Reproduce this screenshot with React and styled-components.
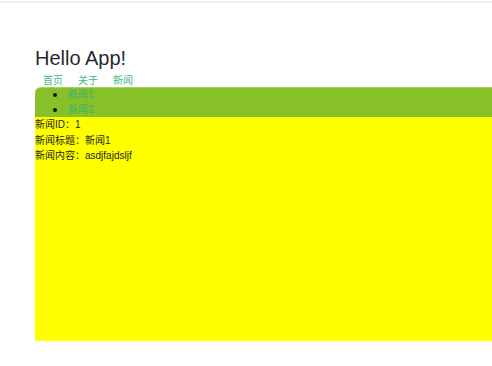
import React from "react";
import styled, { createGlobalStyle } from "styled-components";

const GlobalStyle = createGlobalStyle`
  body {
    margin: 0;
    background: #fff;
    font-family: "Liberation Sans", "Noto Sans CJK SC", sans-serif;
    color: #2c3e50;
  }
`;

const Page = styled.div`
  width: 492px;
  height: 366px;
  overflow: hidden;
  border-top: 2px solid #efefef;
  margin-top: 1px;
  box-sizing: border-box;
`;

const Main = styled.div`
  padding: 43px 0 0 35px;
`;

const Title = styled.h1`
  margin: 0;
  font-size: 20px;
  font-weight: 400;
  line-height: 24px;
  color: #1f2a33;
`;

const Nav = styled.nav`
  display: flex;
  gap: 15px;
  padding: 4px 0 0 8px;
  height: 13px;
`;

const NavLink = styled.a`
  font-size: 10px;
  line-height: 14px;
  color: #42b983;
  text-decoration: none;
`;

const NewsList = styled.ul`
  margin: 0;
  padding: 0 0 0 33px;
  height: 29px;
  list-style: none;
  background: #86c12a;
  border-top-left-radius: 6px;
  border-top: 1px solid #a7cf63;
`;

const NewsItem = styled.li`
  position: relative;
  font-size: 10px;
  line-height: 14.5px;
  color: #3bb36a;
  &::before {
    content: "";
    position: absolute;
    left: -15px;
    top: 5px;
    width: 4px;
    height: 4px;
    border-radius: 50%;
    background: #111;
  }
`;

const Detail = styled.div`
  background: #ffff00;
  height: 224px;
`;

const Line = styled.p`
  margin: 0;
  font-size: 10px;
  line-height: 15.5px;
  color: #222;
`;

export default function App() {
  return (
    <Page>
      <GlobalStyle />
      <Main>
        <Title>Hello App!</Title>
        <Nav>
          <NavLink href="#">首页</NavLink>
          <NavLink href="#">关于</NavLink>
          <NavLink href="#">新闻</NavLink>
        </Nav>
        <NewsList>
          <NewsItem>新闻1</NewsItem>
          <NewsItem>新闻2</NewsItem>
        </NewsList>
        <Detail>
          <Line>新闻ID：1</Line>
          <Line>新闻标题：新闻1</Line>
          <Line>新闻内容：asdjfajdsljf</Line>
        </Detail>
      </Main>
    </Page>
  );
}
